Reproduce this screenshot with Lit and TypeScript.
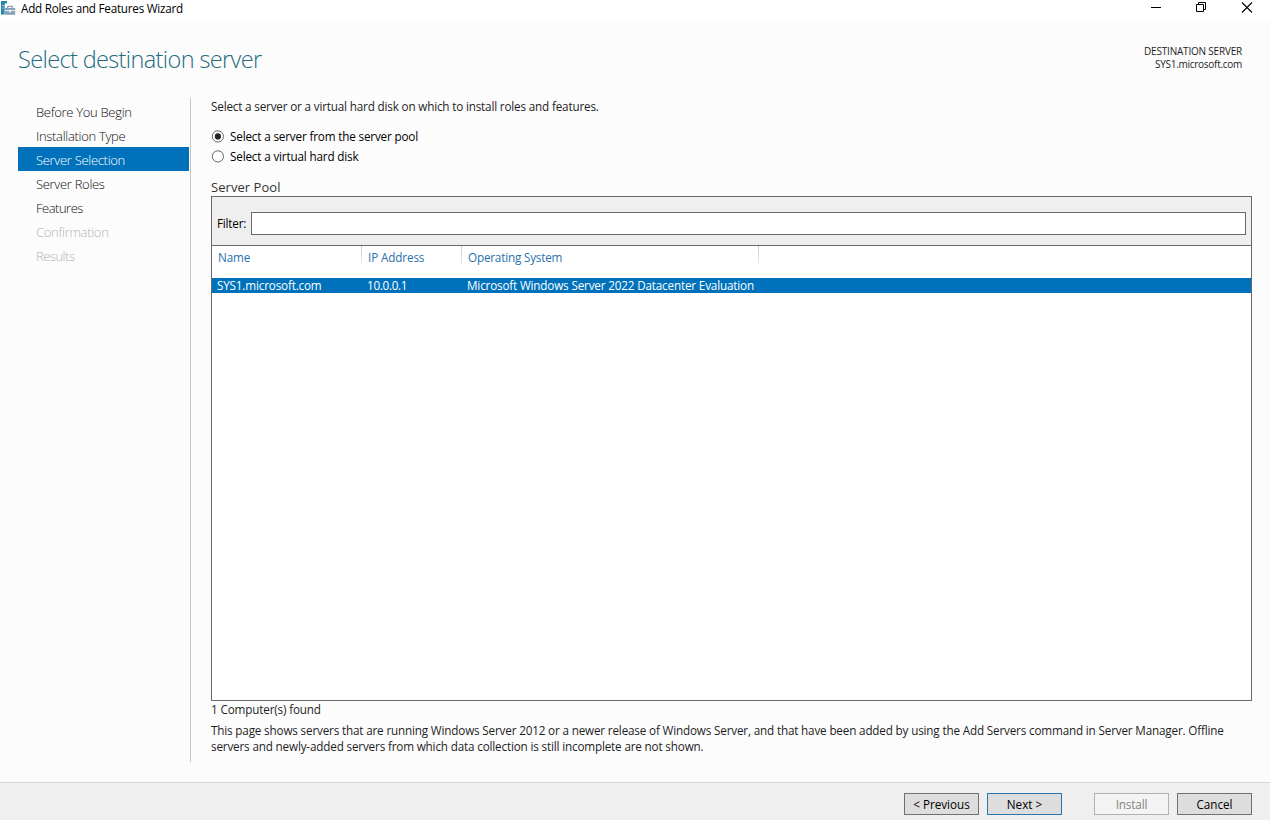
import { LitElement, html, css, svg } from "lit";
import { customElement, property } from "lit/decorators.js";
import { classMap } from "lit/directives/class-map.js";

const steps = [
  { label: "Before You Begin", state: "" },
  { label: "Installation Type", state: "" },
  { label: "Server Selection", state: "active" },
  { label: "Server Roles", state: "" },
  { label: "Features", state: "tight" },
  { label: "Confirmation", state: "disabled" },
  { label: "Results", state: "disabled tight" },
];

@customElement("wizard-titlebar")
class WizardTitlebar extends LitElement {
  static styles = css`
    :host { display: flex; height: 20px; background: #fff; justify-content: space-between; color: #000; }
    .left { display: flex; }
    .icon { margin: 0 0 0 1px; width: 15px; height: 17px; }
    .title { margin-left: 5px; line-height: 17px; letter-spacing: -0.24px; white-space: nowrap; }
    .controls { display: flex; gap: 34px; padding: 2px 17px 0 0; }
    .controls svg { width: 12px; height: 12px; }
  `;
  render() {
    return html`
      <div class="left">
        <svg class="icon" viewBox="0 0 15 17">
          <path d="M0 1h6v2.6H3.6V14.6H0z" fill="#2487ab" />
          <path d="M.8 5.5h2M.8 8h2" stroke="#8fc6da" />
          <path d="M6.8 8V6.2h4.4V8" fill="none" stroke="#6f8fa8" stroke-width="1.1" />
          <rect x="3.8" y="8" width="10.4" height="6.8" fill="#86a2b6" />
          <path d="M4 10.6h10" stroke="#e4eef4" />
          <path d="M9 9.8v2.4" stroke="#fff" stroke-width="1.6" />
        </svg>
        <span class="title">Add Roles and Features Wizard</span>
      </div>
      <div class="controls">
        <svg viewBox="0 0 12 12"><path d="M2 5.5h10" stroke="#000" /></svg>
        <svg viewBox="0 0 12 12" fill="none" stroke="#000">
          <path d="M.5 2.5h7v7h-7zM2.5 2.5v-2h7v7h-2" transform="translate(1 0)" />
        </svg>
        <svg viewBox="0 0 12 12"><path d="M1 .5l10 10M11 .5l-10 10" stroke="#000" stroke-width="1.1" /></svg>
      </div>`;
  }
}

@customElement("wizard-steps")
class WizardSteps extends LitElement {
  static styles = css`
    :host { display: block; width: 171px; margin-top: 1px; padding-right: 1px; height: 663px; padding-top: 1px; border-right: 1px solid #c6c6c6; box-sizing: content-box; }
    .step { height: 24px; line-height: 27px; padding-left: 18px; font-size: 13px; font-weight: 300; letter-spacing: -0.31px; color: #101010; }
    .tight { letter-spacing: -0.5px; }
    .active { background: #0072bc; color: #fff; }
    .disabled { color: #b0b4b8; }
  `;
  render() {
    return steps.map((s) => html`<div class="step ${s.state}">${s.label}</div>`);
  }
}

@customElement("radio-option")
class RadioOption extends LitElement {
  @property() label = "";
  @property({ type: Boolean }) checked = false;
  static styles = css`
    :host { display: flex; align-items: center; height: 20px; gap: 6px; color: #000; letter-spacing: -0.16px; }
    svg { width: 13px; height: 13px; }
  `;
  render() {
    return html`
      <svg viewBox="0 0 13 13">
        <circle cx="6.9" cy="6.4" r="5.6" fill="#fff" stroke="#555" stroke-width=".9" />
        ${this.checked ? svg`<circle cx="6.9" cy="6.4" r="3.1" fill="#222" />` : ""}
      </svg>
      <span>${this.label}</span>`;
  }
}

@customElement("server-pool")
class ServerPool extends LitElement {
  static styles = css`
    :host { display: flex; flex-direction: column; box-sizing: border-box; height: 505px; border: 1px solid #696969; background: #fff; }
    .filter { display: flex; align-items: center; box-sizing: border-box; height: 49px; padding: 5px 5px 0 5px; gap: 5px; background: #efefef; border-bottom: 1px solid #696969; color: #000; }
    .filter label { width: 29px; letter-spacing: -0.2px; white-space: nowrap; margin-bottom: 1px; }
    .box { flex: 1; height: 21px; margin-bottom: 1px; border: 1px solid #696969; background: #fff; box-sizing: content-box; }
    .head, .row { display: grid; grid-template-columns: 150px 100px 297px 1fr; white-space: nowrap; }
    .head { grid-template-rows: 18px; height: 18px; line-height: 23px; color: #2a6fab; margin-bottom: 14px; letter-spacing: -0.12px; }
    .head span { padding-left: 6px; border-right: 1px solid; border-image: linear-gradient(#c8c8c8, #eee) 1; }
    .head .os { letter-spacing: -0.18px; }
    .row { height: 15px; line-height: 15px; background: #0072bc; color: #fff; letter-spacing: -0.165px; }
    .row span { padding-left: 5px; }
    .row .ip { letter-spacing: -0.3px; }
  `;
  render() {
    return html`
      <div class="filter"><label>Filter:</label><div class="box"></div></div>
      <div class="head"><span>Name</span><span>IP Address</span><span class="os">Operating System</span></div>
      <div class="row"><span>SYS1.microsoft.com</span><span class="ip">10.0.0.1</span><span>Microsoft Windows Server 2022 Datacenter Evaluation</span></div>`;
  }
}

@customElement("wizard-button")
class WizardButton extends LitElement {
  @property() label = "";
  @property() kind = "";
  static styles = css`
    .btn { box-sizing: border-box; width: 75px; height: 22px; line-height: 21px; text-align: center; border: 1px solid #707070; background: #ddd; color: #000; }
    .primary { border-color: #2a76ad; }
    .off { border-color: #b0b2b5; background: #f4f4f4; color: #838383; letter-spacing: -0.12px; }
  `;
  render() {
    return html`<div class=${classMap({ btn: true, primary: this.kind === "primary", off: this.kind === "off" })}>${this.label}</div>`;
  }
}

@customElement("app-root")
class AppRoot extends LitElement {
  static styles = css`
    :host { display: flex; flex-direction: column; width: 1270px; height: 820px; overflow: hidden; background: #fcfcfc; color: #1e1e1e;
      font-family: "Open Sans", "Noto Sans", sans-serif; font-size: 11.7px; }
    .top { display: flex; justify-content: space-between; height: 77px; padding: 0 28px 0 18px; box-sizing: border-box; }
    h1 { margin: 22px 0 0; font-size: 23.5px; line-height: 34px; font-weight: 300; letter-spacing: -0.63px; color: #1f6b80; }
    .dest { padding-top: 25px; text-align: right; font-size: 10px; line-height: 13px; letter-spacing: -0.2px; }
    .dest .host { letter-spacing: -0.28px; }
    .body { display: flex; height: 685px; padding-left: 18px; box-sizing: border-box; }
    .content { width: 1041px; margin-left: 20px; }
    .intro { line-height: 18px; letter-spacing: -0.17px; }
    .radios { margin-top: 11px; }
    .pool-title { margin-top: 11px; height: 19px; line-height: 20px; font-size: 13px; letter-spacing: 0.05px; color: #333; }
    .count { line-height: 16px; letter-spacing: -0.15px; }
    .note { margin-top: 5px; line-height: 16px; letter-spacing: -0.163px; white-space: nowrap; }
    .footer { display: flex; justify-content: flex-end; gap: 8px; margin-top: auto; height: 38px; box-sizing: border-box; border-top: 1px solid #d5d5d5; background: #efefef; padding: 10px 18px 0 0; }
    .gap { margin-left: 24px; }
  `;
  render() {
    return html`
      <wizard-titlebar></wizard-titlebar>
      <div class="top">
        <h1>Select destination server</h1>
        <div class="dest"><div>DESTINATION SERVER</div><div class="host">SYS1.microsoft.com</div></div>
      </div>
      <div class="body">
        <wizard-steps></wizard-steps>
        <div class="content">
          <div class="intro">Select a server or a virtual hard disk on which to install roles and features.</div>
          <div class="radios">
            <radio-option label="Select a server from the server pool" checked></radio-option>
            <radio-option label="Select a virtual hard disk"></radio-option>
          </div>
          <div class="pool-title">Server Pool</div>
          <server-pool></server-pool>
          <div class="count">1 Computer(s) found</div>
          <div class="note">This page shows servers that are running Windows Server 2012 or a newer release of Windows Server, and that have been added by using the Add Servers command in Server Manager. Offline<br />servers and newly-added servers from which data collection is still incomplete are not shown.</div>
        </div>
      </div>
      <div class="footer">
        <wizard-button label="&lt; Previous"></wizard-button>
        <wizard-button label="Next &gt;" kind="primary"></wizard-button>
        <wizard-button class="gap" label="Install" kind="off"></wizard-button>
        <wizard-button label="Cancel"></wizard-button>
      </div>`;
  }
}
